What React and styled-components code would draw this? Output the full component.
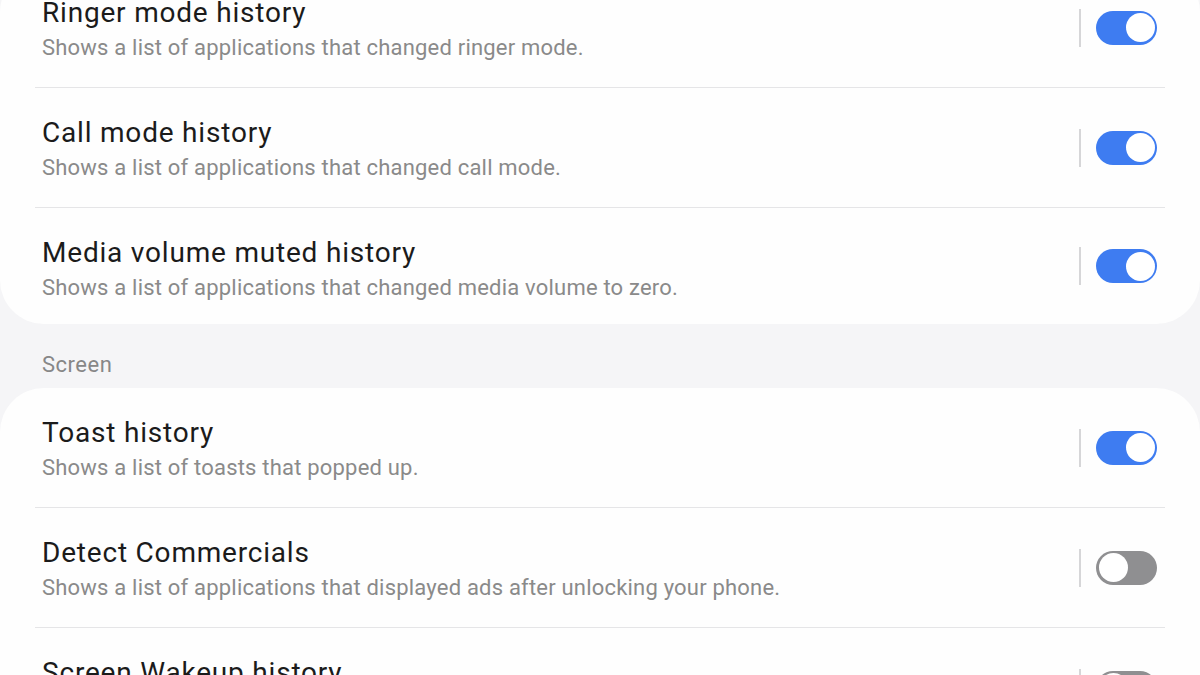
import React from 'react'
import styled, { createGlobalStyle } from 'styled-components'

const Global = createGlobalStyle`
  html, body {
    margin: 0;
    padding: 0;
    background: #f5f5f7;
    font-family: Roboto, "Noto Sans", "Liberation Sans", sans-serif;
    overflow: hidden;
  }
`

const Page = styled.div`
  width: 1200px;
  height: 675px;
  overflow: hidden;
  background: #f5f5f7;
`

const Scroller = styled.div`
  margin-top: -32px;
`

const Card = styled.div`
  background: #fefefe;
  border-radius: 44px;
  padding: 0 35px;
`

const SectionLabel = styled.div`
  height: 64px;
  box-sizing: border-box;
  padding: 27px 0 0 42px;
  font-size: 22px;
  line-height: 28px;
  letter-spacing: 0.5px;
  color: #878787;
`

const Row = styled.div`
  display: flex;
  align-items: center;
  height: ${p => (p.$last ? '116px' : '119px')};
  padding: 0 8px 0 7px;
  border-bottom: ${p => (p.$last ? 'none' : '1px solid #e5e5e7')};
`

const Text = styled.div`
  flex: 1;
  display: flex;
  flex-direction: column;
  align-self: flex-start;
  padding-top: 28px;
`

const Title = styled.div`
  font-size: 28px;
  line-height: 34px;
  letter-spacing: 0.8px;
  color: #1b1b1b;
`

const Sub = styled.div`
  font-size: 22px;
  line-height: 28px;
  letter-spacing: 0.2px;
  margin-top: 4px;
  color: #8a8a8a;
`

const Divider = styled.div`
  width: 2px;
  height: 38px;
  background: #d6d6d8;
  margin-right: 15px;
`

const Track = styled.div`
  width: 61px;
  height: 34px;
  box-sizing: border-box;
  border-radius: 17px;
  background: ${p => (p.$on ? '#3e7cf1' : '#8f8f91')};
  display: flex;
  align-items: center;
  justify-content: ${p => (p.$on ? 'flex-end' : 'flex-start')};
  padding: 0 2.5px;
`

const Knob = styled.div`
  width: 29px;
  height: 29px;
  border-radius: 50%;
  background: #fff;
`

const Toggle = ({ on }) => (
  <Track $on={on}>
    <Knob />
  </Track>
)

const Item = ({ title, sub, on, last }) => (
  <Row $last={last}>
    <Text>
      <Title>{title}</Title>
      <Sub>{sub}</Sub>
    </Text>
    <Divider />
    <Toggle on={on} />
  </Row>
)

export default function App() {
  return (
    <Page>
      <Global />
      <Scroller>
        <Card>
          <Item title="Ringer mode history" sub="Shows a list of applications that changed ringer mode." on />
          <Item title="Call mode history" sub="Shows a list of applications that changed call mode." on />
          <Item title="Media volume muted history" sub="Shows a list of applications that changed media volume to zero." on last />
        </Card>
        <SectionLabel>Screen</SectionLabel>
        <Card>
          <Item title="Toast history" sub="Shows a list of toasts that popped up." on />
          <Item title="Detect Commercials" sub="Shows a list of applications that displayed ads after unlocking your phone." />
          <Item title="Screen Wakeup history" sub="Shows a list of applications that woke up the screen." />
        </Card>
      </Scroller>
    </Page>
  )
}
